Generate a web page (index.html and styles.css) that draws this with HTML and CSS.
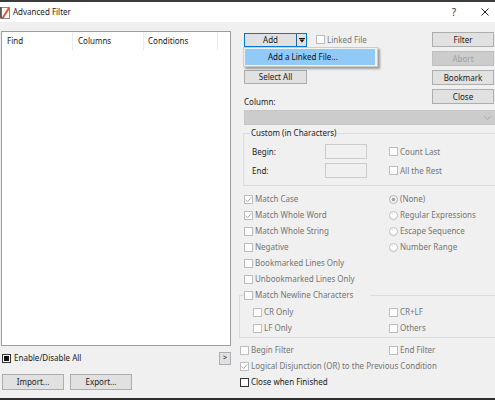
FILE: index.html
```html
<!DOCTYPE html>
<html>
<head>
<meta charset="utf-8">
<title>Advanced Filter</title>
<link rel="stylesheet" href="styles.css">
</head>
<body>
<div class="edge-top"></div>
<div class="titlebar">
  <svg class="appicon" viewBox="0 0 10 13"><rect x="1.5" y="1.5" width="8" height="11" fill="#fff" stroke="#8a8a8a"/><path d="M0.8 1 V12.5" stroke="#333" stroke-width="1.2"/><path d="M3 11.5 L9 2" stroke="#e2552b" stroke-width="2"/><path d="M2.3 12.6 L3.3 11" stroke="#444" stroke-width="1"/></svg>
  <span class="title">Advanced Filter</span>
  <span class="help">?</span>
  <svg class="closex" viewBox="0 0 8 8"><path d="M0.5 0.5 L7.5 7.5 M7.5 0.5 L0.5 7.5" stroke="#222" stroke-width="1"/></svg>
</div>
<div class="dialog">
  <div class="leftcol">
    <div class="listbox">
      <div class="lv-header">
        <div class="lv-col c1">Find</div>
        <div class="lv-col c2">Columns</div>
        <div class="lv-col c3">Conditions</div>
      </div>
    </div>
    <div class="enable-row">
      <span class="cb indet"></span><span class="lbl">Enable/Disable All</span>
      <button class="btn tiny">&gt;</button>
    </div>
    <div class="io-row">
      <button class="btn io">Import...</button>
      <button class="btn io">Export...</button>
    </div>
  </div>

  <div class="rightcol">
    <div class="top">
      <div class="top-left">
        <div class="add-row">
          <div class="split">
            <span class="split-main">Add</span>
            <span class="split-arrow"><svg viewBox="0 0 6 5" class="arr"><path d="M0 0.5 H6" stroke="#111" stroke-width="1"/><path d="M0.5 1.5 H5.5 L3 4.5 Z" fill="#111"/></svg></span>
          </div>
          <span class="opt linked"><span class="cb"></span><span class="dis">Linked File</span></span>
          <div class="menu">
            <div class="menu-item">Add a Linked File...</div>
          </div>
        </div>
        <button class="btn selall">Select All</button>
        <div class="collabel">Column:</div>
      </div>
      <div class="btncol">
        <button class="btn side">Filter</button>
        <button class="btn side disabled">Abort</button>
        <button class="btn side">Bookmark</button>
        <button class="btn side">Close</button>
      </div>
    </div>

    <div class="combo"><svg class="chev" viewBox="0 0 7 4"><path d="M0.5 0.5 L3.5 3.5 L6.5 0.5" fill="none" stroke="#a8a8a8" stroke-width="1"/></svg></div>

    <fieldset class="group g1">
      <legend class="g1-title">Custom (in Characters)</legend>
      <div class="range-row first">
        <span class="range-label">Begin:</span>
        <span class="tb"></span>
        <span class="opt range-opt"><span class="cb"></span><span class="dis">Count Last</span></span>
      </div>
      <div class="range-row">
        <span class="range-label">End:</span>
        <span class="tb"></span>
        <span class="opt range-opt"><span class="cb"></span><span class="dis">All the Rest</span></span>
      </div>
    </fieldset>

    <div class="checklist">
      <span class="opt"><span class="cb"><svg class="tick" viewBox="0 0 7 7"><path d="M0.8 3.6 L2.7 5.5 L6.3 1.3" fill="none" stroke="#a5a5a5" stroke-width="1"/></svg></span><span class="dis">Match Case</span></span>
      <span class="opt"><span class="rb sel"></span><span class="dis">(None)</span></span>
      <span class="opt"><span class="cb"><svg class="tick" viewBox="0 0 7 7"><path d="M0.8 3.6 L2.7 5.5 L6.3 1.3" fill="none" stroke="#a5a5a5" stroke-width="1"/></svg></span><span class="dis">Match Whole Word</span></span>
      <span class="opt"><span class="rb"></span><span class="dis">Regular Expressions</span></span>
      <span class="opt"><span class="cb"></span><span class="dis">Match Whole String</span></span>
      <span class="opt"><span class="rb"></span><span class="dis">Escape Sequence</span></span>
      <span class="opt"><span class="cb"></span><span class="dis">Negative</span></span>
      <span class="opt"><span class="rb"></span><span class="dis">Number Range</span></span>
      <span class="opt wide"><span class="cb"></span><span class="dis">Bookmarked Lines Only</span></span>
      <span class="opt wide"><span class="cb"></span><span class="dis">Unbookmarked Lines Only</span></span>
    </div>

    <fieldset class="group g2">
      <legend class="g2-title"><span class="cb"></span><span class="dis">Match Newline Characters</span></legend>
      <div class="nl-grid">
        <span class="opt"><span class="cb"></span><span class="dis">CR Only</span></span>
        <span class="opt"><span class="cb"></span><span class="dis">CR+LF</span></span>
        <span class="opt"><span class="cb"></span><span class="dis">LF Only</span></span>
        <span class="opt"><span class="cb"></span><span class="dis">Others</span></span>
      </div>
    </fieldset>

    <div class="bottomlist">
      <span class="opt"><span class="cb"></span><span class="dis">Begin Filter</span></span>
      <span class="opt"><span class="cb"></span><span class="dis">End Filter</span></span>
      <span class="opt wide"><span class="cb"><svg class="tick" viewBox="0 0 7 7"><path d="M0.8 3.6 L2.7 5.5 L6.3 1.3" fill="none" stroke="#a5a5a5" stroke-width="1"/></svg></span><span class="dis">Logical Disjunction (OR) to the Previous Condition</span></span>
      <span class="opt wide"><span class="cb on"></span><span class="en">Close when Finished</span></span>
    </div>
  </div>
</div>
<div class="edge-bottom"></div>
</body>
</html>
```

FILE: styles.css
```css
* { box-sizing: border-box; }
html, body { margin: 0; padding: 0; }
body {
  width: 495px;
  height: 400px;
  overflow: hidden;
  background: #f0f0f0;
  font-family: "Noto Sans", "Liberation Sans", sans-serif;
  font-size: 8px;
  line-height: 10px;
  color: #1a1a1a;
}

.edge-top { height: 2px; background: #3c3c3c; }

.titlebar {
  height: 20px;
  background: #ffffff;
  display: flex;
  align-items: center;
}
.appicon { width: 10px; height: 13px; margin-left: 0; flex: none; }
.title { margin-left: 3px; color: #1a1a1a; }
.help { margin-left: auto; margin-right: 25px; font-size: 10px; color: #333; }
.closex { width: 8px; height: 8px; margin-right: 6px; flex: none; }

.dialog { display: flex; height: 376px; }

/* left column */
.leftcol { width: 239px; padding: 9px 0 0 1px; flex: none; }
.listbox {
  width: 230px;
  height: 315px;
  border: 1px solid #9c9c9c;
  background: #ffffff;
}
.lv-header { display: flex; height: 18px; }
.lv-col {
  height: 18px;
  line-height: 18px;
  padding-left: 5px;
  border-right: 1px solid #ececec;
  white-space: nowrap;
  color: #1a1a1a;
}
.c1 { width: 71px; }
.c2 { width: 71px; }
.c3 { width: 74px; padding-left: 4px; }

.enable-row {
  display: flex;
  align-items: center;
  height: 14px;
  margin-top: 5px;
  width: 230px;
}
.enable-row .cb { margin-left: 1px; }
.enable-row .lbl { margin-left: 3px; }

.btn {
  font-family: inherit;
  font-size: 8px;
  line-height: 10px;
  color: #1a1a1a;
  background: #e1e1e1;
  border: 1px solid #adadad;
  padding: 0;
  margin: 0;
  display: flex;
  align-items: center;
  justify-content: center;
  white-space: nowrap;
}
.btn.tiny { margin-left: auto; width: 12px; height: 13px; font-size: 7px; }
.io-row { display: flex; gap: 6px; margin-top: 9px; padding-left: 1px; }
.btn.io { width: 62px; height: 16px; }

/* right column */
.rightcol {
  width: 256px;
  flex: none;
  padding-top: 10px;
  display: flex;
  flex-direction: column;
}
.top { display: flex; }
.top-left { width: 188px; margin-left: 5px; display: flex; flex-direction: column; }
.btncol { width: 62px; display: flex; flex-direction: column; gap: 4px; }
.btn.side { width: 62px; height: 15px; }
.btn.disabled { background: #cccccc; border-color: #bfbfbf; color: #a0a0a0; }

.add-row { position: relative; display: flex; align-items: center; height: 15px; }
.split {
  display: flex;
  width: 63px;
  height: 14px;
  margin-top: 1px;
  border: 1px solid #0078d7;
  background: #e1e1e1;
}
.split-main {
  flex: 1;
  text-align: center;
  line-height: 12px;
  border-right: 1px solid #2b5f8f;
}
.split-arrow { width: 9px; display: flex; align-items: center; justify-content: center; }
.arr { width: 6px; height: 5px; }
.linked { margin-left: 9px; }

.menu {
  position: absolute;
  left: -1px;
  top: 15px;
  width: 135px;
  height: 20px;
  background: #f2f2f2;
  border: 1px solid #cccccc;
  box-shadow: 2px 2px 2px rgba(0, 0, 0, 0.35);
  z-index: 5;
}
.menu-item {
  margin: 1px 0 0 1px;
  width: 130px;
  height: 16px;
  line-height: 16px;
  background: #91c9f7;
  padding-left: 23px;
  color: #111;
  white-space: nowrap;
}

.btn.selall { width: 63px; height: 14px; margin-top: 23px; }
.collabel { margin-top: 13px; height: 10px; }

.combo {
  margin: 3px 0 0 5px;
  width: 252px;
  height: 15px;
  background: #cccccc;
  border: 1px solid #c6c6c6;
  display: flex;
  align-items: center;
  justify-content: flex-end;
  padding-right: 4px;
}
.chev { width: 7px; height: 4px; }

/* group boxes */
.group {
  margin: 0;
  padding: 0;
  border: 1px solid #dcdcdc;
  min-width: 0;
}
.g1 { margin: 3px 0 0 4px; width: 256px; padding: 0 0 7px 0; }
.g1-title { margin-left: 6px; padding: 0 1px; line-height: 10px; color: #1a1a1a; }
.range-row { display: flex; align-items: center; height: 15px; margin-top: 4px; padding-left: 8px; }
.range-row.first { margin-top: 6px; }
.range-label { width: 73px; }
.tb { width: 42px; height: 15px; border: 1px solid #cccccc; background: #f0f0f0; flex: none; }
.range-opt { margin-left: 22px; }

.opt { display: flex; align-items: center; gap: 2px; white-space: nowrap; }
.dis { color: #747474; }
.en { color: #1a1a1a; }

.cb {
  width: 9px;
  height: 9px;
  border: 1px solid #bdbdbd;
  background: #ffffff;
  flex: none;
  display: flex;
  align-items: center;
  justify-content: center;
}
.cb.on { border-color: #333333; }
.cb.indet { border-color: #333333; background: #111; box-shadow: inset 0 0 0 1px #fff; }
.tick { width: 7px; height: 7px; }
.rb {
  width: 9px;
  height: 9px;
  border: 1px solid #bdbdbd;
  border-radius: 50%;
  background: #ffffff;
  flex: none;
}
.rb.sel { background: #a9a9a9; box-shadow: inset 0 0 0 1.5px #fff; }

.checklist {
  margin-top: 5px;
  padding-left: 5px;
  display: grid;
  grid-template-columns: 145px 1fr;
  grid-auto-rows: 16px;
}
.wide { grid-column: 1 / 3; }

.g2 { width: 262px; padding: 1px 0 1px 0; }
.g2-title {
  margin-left: 4px;
  padding: 0 17px 0 0;
  height: 16px;
  display: flex;
  align-items: center;
  gap: 2px;
}
.nl-grid {
  display: grid;
  grid-template-columns: 136px 1fr;
  grid-auto-rows: 16px;
  padding-left: 13px;
}

.bottomlist {
  margin-top: 4px;
  padding-left: 1px;
  display: grid;
  grid-template-columns: 149px 1fr;
  grid-auto-rows: 16px;
}

.edge-bottom { height: 2px; background: #2e2e2e; }
```
